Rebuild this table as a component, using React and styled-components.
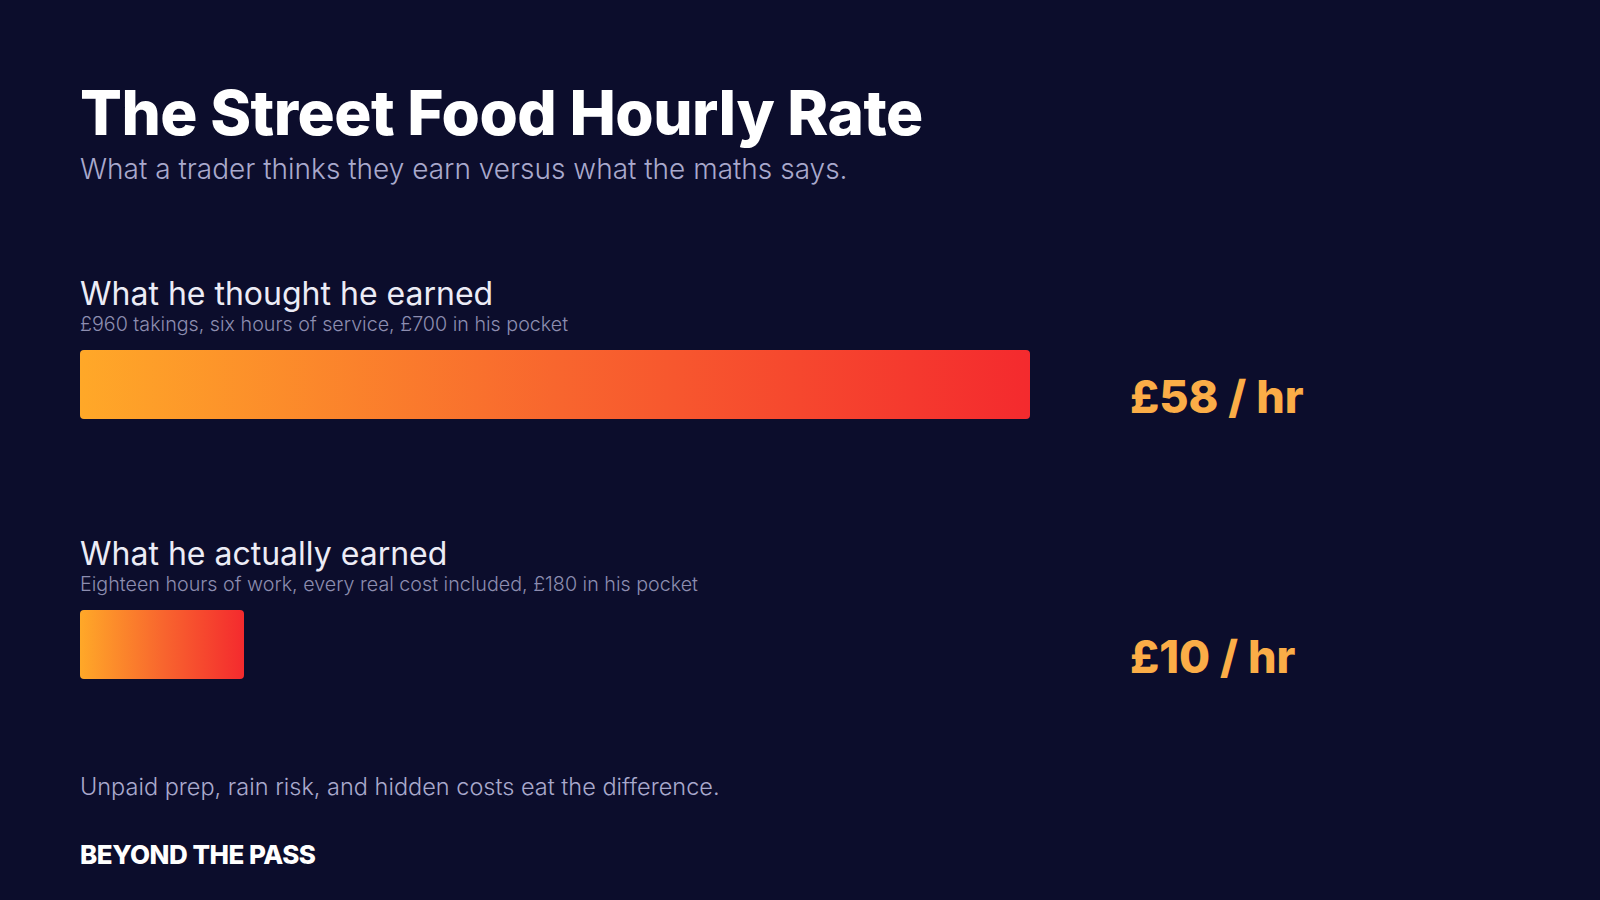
import React from 'react';
import styled, { createGlobalStyle } from "styled-components";

const GlobalStyle = createGlobalStyle`
    html, body {
        margin: 0;
        padding: 0;
        background: #0c0d2c;
    }
    body {
        font-family: Inter, "Noto Sans", sans-serif;
    }
`

const Page = styled.div`
    width: 1600px;
    height: 900px;
    box-sizing: border-box;
    padding: 76px 80px 0 80px;
    background-color: #0c0d2c;
    overflow: hidden;
`
const Title = styled.h1`
    margin: 0;
    font-size: 62px;
    line-height: 74px;
    font-weight: 800;
    letter-spacing: -0.5px;
    color: #ffffff;
`
const Subtitle = styled.p`
    margin: 2px 0 0 0;
    font-size: 28px;
    line-height: 34px;
    font-weight: 300;
    color: #a9a9cc;
`
const Comparisons = styled.div`
    display: flex;
    flex-direction: column;
    gap: 118px;
    margin-top: 91px;
`
const Row = styled.div`
    display: grid;
    grid-template-columns: 950px 1fr;
    column-gap: 100px;
    align-items: end;
`
const Label = styled.div`
    grid-column: 1 / 3;
    margin-bottom: 14px;
`
const RowTitle = styled.h2`
    margin: 0;
    font-size: 32px;
    line-height: 34px;
    font-weight: 400;
    color: #ececf6;
`
const RowNote = styled.p`
    margin: 1px 0 0 0;
    font-size: 19.7px;
    line-height: 24px;
    font-weight: 300;
    color: #8d8db0;
`
const Track = styled.div`
    height: 69px;
`
const Bar = styled.div`
    height: 100%;
    border-radius: 4px;
    background: linear-gradient(90deg, #ffa828 0%, #f8662e 50%, #f42a2e 100%);
`
const Rate = styled.div`
    align-self: end;
    margin-bottom: -6px;
    font-size: 45px;
    line-height: 56px;
    font-weight: 800;
    color: #fbad47;
`
const Note = styled.p`
    margin: 93px 0 0 0;
    font-size: 23.5px;
    line-height: 30px;
    font-weight: 300;
    color: #a9a9cc;
`
const Brand = styled.div`
    margin-top: 38px;
    font-size: 26px;
    line-height: 30px;
    font-weight: 800;
    letter-spacing: -0.5px;
    color: #ffffff;
`

const rows = [
    {
        title: 'What he thought he earned',
        note: '£960 takings, six hours of service, £700 in his pocket',
        rate: 58,
    },
    {
        title: 'What he actually earned',
        note: 'Eighteen hours of work, every real cost included, £180 in his pocket',
        rate: 10,
    },
]

const maxRate = 58

const App = () => {
    return (
        <Page>
            <GlobalStyle />
            <Title>The Street Food Hourly Rate</Title>
            <Subtitle>What a trader thinks they earn versus what the maths says.</Subtitle>
            <Comparisons>
                {rows.map(row => (
                    <Row key={row.title}>
                        <Label>
                            <RowTitle>{row.title}</RowTitle>
                            <RowNote>{row.note}</RowNote>
                        </Label>
                        <Track>
                            <Bar style={{ width: `${(row.rate / maxRate) * 100}%` }} />
                        </Track>
                        <Rate>£{row.rate} / hr</Rate>
                    </Row>
                ))}
            </Comparisons>
            <Note>Unpaid prep, rain risk, and hidden costs eat the difference.</Note>
            <Brand>BEYOND THE PASS</Brand>
        </Page>
    )
}

export default App;
